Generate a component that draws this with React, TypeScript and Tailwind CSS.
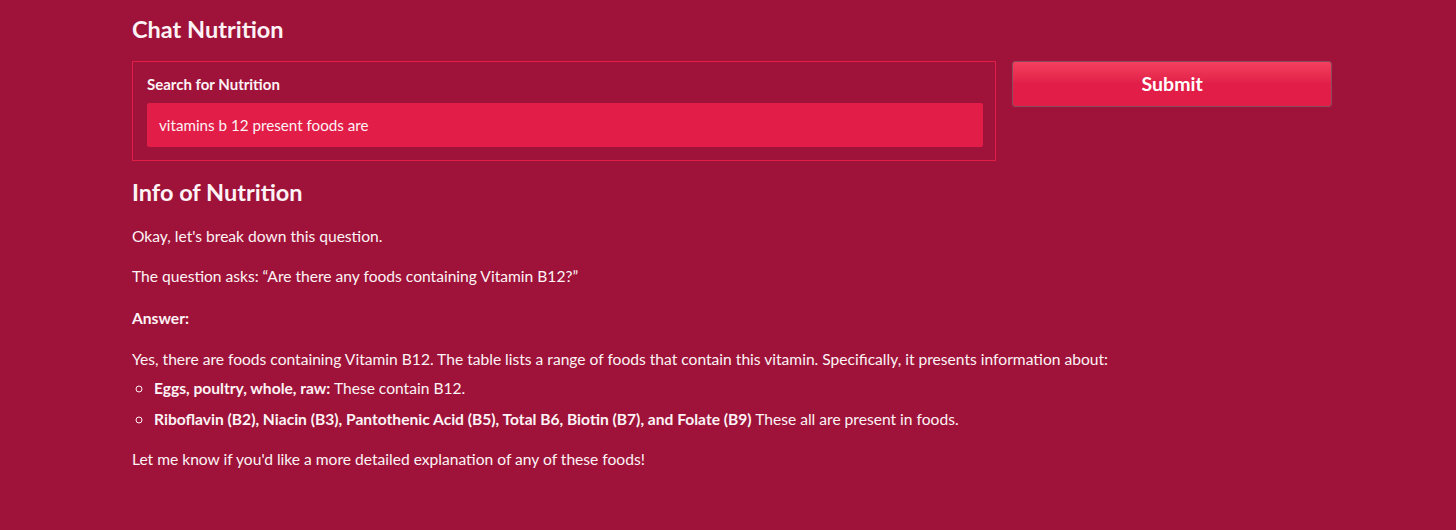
export default function App() {
  return (
    <div
      className="min-h-[530px] bg-[#9f1239] text-[#fdf2f5]"
      style={{ fontFamily: "Lato, 'Open Sans', sans-serif" }}
    >
      <div className="w-[1200px] ml-[132px] pt-[14px]">
        <h1 className="text-[23.5px] font-bold leading-[30px]">Chat Nutrition</h1>
        <div className="flex gap-4 mt-[17px] items-start">
          <div className="w-[865px] h-[100px] border border-[#e11d48] pl-[14px] pr-[12px] pt-[13px]">
            <label className="block text-[15px] font-bold leading-[18px]">Search for Nutrition</label>
            <div className="mt-[10px] h-[44px] bg-[#e11d48] rounded-[2px] flex items-center px-3 text-[15.2px]">
              vitamins b 12 present foods are
            </div>
          </div>
          <button className="w-[320px] h-[46px] rounded-[3px] border border-[#8a4a5c] bg-gradient-to-b from-[#f43f5e] via-[#e11d48] to-[#e11d48] text-[19.5px] font-bold text-white">
            Submit
          </button>
        </div>
        <h2 className="text-[23.5px] font-bold leading-[30px] mt-[16px]">Info of Nutrition</h2>
        <div className="text-[15.6px] leading-[20px] mt-[19px]">
          <p>Okay, let's break down this question.</p>
          <p className="mt-[20px]">The question asks: “Are there any foods containing Vitamin B12?”</p>
          <p className="mt-[22px] font-bold">Answer:</p>
          <p className="mt-[21px]">
            Yes, there are foods containing Vitamin B12. The table lists a range of foods that contain this vitamin. Specifically, it presents information about:
          </p>
          <ul className="list-[circle] pl-[22px] mt-[9px] flex flex-col gap-[11px] marker:text-[17px]">
            <li>
              <b>Eggs, poultry, whole, raw:</b> These contain B12.
            </li>
            <li>
              <b>Riboflavin (B2), Niacin (B3), Pantothenic Acid (B5), Total B6, Biotin (B7), and Folate (B9)</b> These all are present in foods.
            </li>
          </ul>
          <p className="mt-[20px]">Let me know if you'd like a more detailed explanation of any of these foods!</p>
        </div>
      </div>
    </div>
  );
}
